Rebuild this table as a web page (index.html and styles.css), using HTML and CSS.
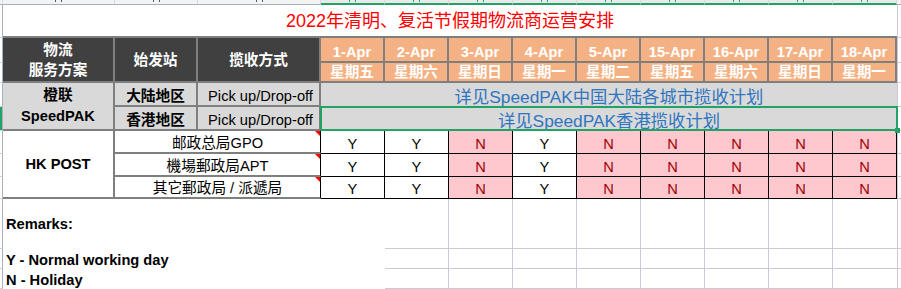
FILE: index.html
```html
<!DOCTYPE html>
<html lang="zh-CN">
<head>
<meta charset="utf-8">
<title>2022年清明、复活节假期物流商运营安排</title>
<link rel="stylesheet" href="styles.css">
</head>
<body>
<div class="sheet">
  <div class="ch corner"></div>
  <div class="ch"><i class="mk"></i></div>
  <div class="ch"><i class="mk"></i></div>
  <div class="ch"><i class="mk"></i></div>
  <div class="ch sel"><i class="mk"></i></div>
  <div class="ch sel"><i class="mk"></i></div>
  <div class="ch sel"><i class="mk"></i></div>
  <div class="ch sel"><i class="mk"></i></div>
  <div class="ch sel"><i class="mk"></i></div>
  <div class="ch sel"><i class="mk"></i></div>
  <div class="ch sel"><i class="mk"></i></div>
  <div class="ch sel"><i class="mk"></i></div>
  <div class="ch sel"><i class="mk"></i></div>
  <div class="ch last"></div>

  <div class="rh"></div>
  <div class="title">2022年清明、复活节假期物流商运营安排</div>
  <div class="m"></div>

  <div class="rh"></div>
  <div class="hd">物流<br>服务方案</div>
  <div class="hd">始发站</div>
  <div class="hd">揽收方式</div>
  <div class="dt">1-Apr</div>
  <div class="dt">2-Apr</div>
  <div class="dt">3-Apr</div>
  <div class="dt">4-Apr</div>
  <div class="dt">5-Apr</div>
  <div class="dt">15-Apr</div>
  <div class="dt">16-Apr</div>
  <div class="dt">17-Apr</div>
  <div class="dt">18-Apr</div>
  <div class="m"></div>

  <div class="rh"></div>
  <div class="dt wd">星期五</div>
  <div class="dt wd">星期六</div>
  <div class="dt wd">星期日</div>
  <div class="dt wd">星期一</div>
  <div class="dt wd">星期二</div>
  <div class="dt wd">星期五</div>
  <div class="dt wd">星期六</div>
  <div class="dt wd">星期日</div>
  <div class="dt wd">星期一</div>
  <div class="m"></div>

  <div class="rh"></div>
  <div class="sp">橙联<br>SpeedPAK</div>
  <div class="rg">大陆地区</div>
  <div class="pk">Pick up/Drop-off</div>
  <div class="lnk">详见SpeedPAK中国大陆各城市揽收计划</div>
  <div class="m"></div>

  <div class="rh sel"></div>
  <div class="rg">香港地区</div>
  <div class="pk">Pick up/Drop-off</div>
  <div class="lnk sel">详见SpeedPAK香港揽收计划</div>
  <div class="m"></div>

  <div class="rh"></div>
  <div class="hk">HK POST</div>
  <div class="po">邮政总局GPO</div>
  <div class="c">Y</div><div class="c">Y</div><div class="c n">N</div><div class="c">Y</div><div class="c n">N</div><div class="c n">N</div><div class="c n">N</div><div class="c n">N</div><div class="c n">N</div>
  <div class="m"></div>

  <div class="rh"></div>
  <div class="po">機場郵政局APT</div>
  <div class="c">Y</div><div class="c">Y</div><div class="c n">N</div><div class="c">Y</div><div class="c n">N</div><div class="c n">N</div><div class="c n">N</div><div class="c n">N</div><div class="c n">N</div>
  <div class="m"></div>

  <div class="rh"></div>
  <div class="po">其它郵政局 / 派遞局</div>
  <div class="c">Y</div><div class="c">Y</div><div class="c n">N</div><div class="c">Y</div><div class="c n">N</div><div class="c n">N</div><div class="c n">N</div><div class="c n">N</div><div class="c n">N</div>
  <div class="m"></div>

  <div class="rh"></div>
  <div class="rm rm-top">Remarks:</div>
  <div class="g"></div><div class="g"></div><div class="g"></div><div class="g"></div><div class="g"></div><div class="g"></div><div class="g"></div><div class="g e"></div>
  <div class="m"></div>

  <div class="rh"></div>
  <div class="rm">Y - Normal working day</div>
  <div class="g"></div><div class="g"></div><div class="g"></div><div class="g"></div><div class="g"></div><div class="g"></div><div class="g"></div><div class="g e"></div>
  <div class="m"></div>

  <div class="rh"></div>
  <div class="rm">N - Holiday</div>
  <div class="g"></div><div class="g"></div><div class="g"></div><div class="g"></div><div class="g"></div><div class="g"></div><div class="g"></div><div class="g e"></div>
  <div class="m"></div>
</div>
</body>
</html>
```

FILE: styles.css
```css
html, body {
  margin: 0;
  padding: 0;
  background: #ffffff;
  overflow: hidden;
}

.sheet {
  display: grid;
  grid-template-columns: 3px 112px 83px 123px repeat(9, 64px) 1fr;
  grid-template-rows: 5px 33px 25px 20px 24px 24px 23px 23px 22px 50px 20px 20px;
  width: 901px;
  height: 289px;
  font-family: "Liberation Sans", "Noto Sans CJK SC", sans-serif;
  font-size: 14.67px;
  line-height: 17px;
  color: #000000;
}

.sheet > div {
  box-sizing: border-box;
  display: flex;
  justify-content: center;
  align-items: flex-end;
  text-align: center;
  white-space: nowrap;
  min-width: 0;
}

/* column header strip */
.ch {
  background: #f3f3f3;
  border-right: 1px solid #d6d8de;
  border-bottom: 1px solid #a8afc0;
  overflow: hidden;
}
.sheet > .ch { align-items: flex-start; }
.mk {
  display: block;
  width: 5px;
  height: 2px;
  border-left: 1px solid #555555;
  border-right: 1px solid #555555;
}
.ch.sel {
  background: #e9e9e9;
  border-bottom: 2px solid #21a366;
}
.ch.sel .mk {
  border-color: #21a366;
}
.ch.last { border-right: none; }

/* row header strip */
.rh {
  background: #ffffff;
  border-right: 1px solid #a8afc0;
  border-bottom: 1px solid #d0d3db;
}
.rh.sel {
  background: #21a366;
}

/* right edge gridline column */
.m {
  border-left: 1px solid #c9ccd5;
  border-bottom: 1px solid #c9ccd5;
}

.title {
  grid-column: span 12;
  border-bottom: 2px solid #7f7f7f;
  color: #ff0000;
  font-size: 18px;
  line-height: 24px;
}
.sheet > .title { align-items: center; }

.hd {
  grid-row: span 2;
  background: #404040;
  color: #ffffff;
  font-weight: bold;
  line-height: 20px;
  border-right: 2px solid #7f7f7f;
  border-bottom: 2px solid #7f7f7f;
}
.sheet > .hd { align-items: center; }

.dt {
  background: #f4b183;
  color: #ffffff;
  font-weight: bold;
  border-right: 2px solid #7f7f7f;
  border-bottom: 2px solid #7f7f7f;
}

.sp {
  grid-row: span 2;
  background: #d9d9d9;
  font-weight: bold;
  line-height: 21px;
  border-right: 2px solid #7f7f7f;
  border-bottom: 2px solid #7f7f7f;
}
.sheet > .sp { align-items: center; }

.rg {
  background: #d9d9d9;
  font-weight: bold;
  border-right: 2px solid #7f7f7f;
  border-bottom: 2px solid #7f7f7f;
}

.pk {
  background: #d9d9d9;
  padding-left: 4px;
  border-right: 2px solid #7f7f7f;
  border-bottom: 2px solid #7f7f7f;
}

.lnk {
  grid-column: span 9;
  background: #d9d9d9;
  color: #2f75c0;
  font-size: 17.33px;
  line-height: 19px;
}
.lnk.sel {
  position: relative;
  z-index: 2;
}
.lnk.sel::after {
  content: "";
  position: absolute;
  left: -1px;
  top: -1px;
  right: -1px;
  bottom: 0;
  border: 2px solid #21a366;
}
.lnk.sel::before {
  content: "";
  position: absolute;
  right: -3px;
  bottom: -2px;
  width: 5px;
  height: 5px;
  background: #21a366;
  z-index: 3;
}

.hk {
  grid-row: span 3;
  font-weight: bold;
  border-right: 2px solid #7f7f7f;
  border-bottom: 2px solid #7f7f7f;
}
.sheet > .hk { align-items: center; }

.po {
  grid-column: span 2;
  position: relative;
  border-right: 1px solid #000000;
  border-bottom: 2px solid #7f7f7f;
}
.po::after {
  content: "";
  position: absolute;
  top: 0;
  right: 0;
  border-top: 5px solid #ff0000;
  border-left: 5px solid transparent;
}

.c {
  border-right: 1px solid #000000;
  border-bottom: 1px solid #000000;
}
.c.n {
  background: #ffc7ce;
  color: #9c0006;
}

.rm {
  grid-column: span 4;
  font-weight: bold;
  padding-left: 3px;
}
.sheet > .rm { justify-content: flex-start; }
.sheet > .rm-top { align-items: center; }

.g {
  border-right: 1px solid #c9ccd5;
  border-bottom: 1px solid #c9ccd5;
}
.g.e { border-right: none; }
```
